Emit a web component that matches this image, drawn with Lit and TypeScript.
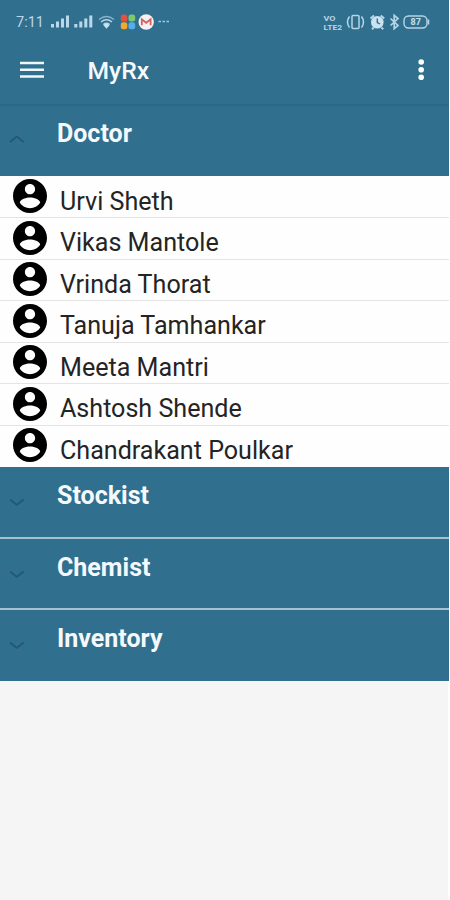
import { LitElement, html, css, svg } from "lit";
import { customElement, property } from "lit/decorators.js";

@customElement("status-bar")
class StatusBar extends LitElement {
  static styles = css`
    :host { display: flex; height: 44px; align-items: center; color: #b9d9e9; font: 500 14.5px Roboto, sans-serif; }
    .clock { width: 33.5px; margin-left: 16px; font-weight: 400; white-space: nowrap; }
    .left { width: 122px; height: 44px; }
    .right { width: 110px; height: 44px; margin-left: auto; margin-right: 17px; }
    svg { display: block; }
    .tiny { font: 700 7.5px/1 Roboto, sans-serif; fill: #b5d6e6; }
    .charge { font: 700 9px Roboto, sans-serif; fill: #c5e0ed; }
    .glyph { fill: none; stroke: #b5d6e6; }
  `;
  bars(x: number) {
    return svg`<path d="M${x} 24h3v3.5h-3zM${x + 5} 21.5h3v6h-3zM${x + 10} 18.5h3v9h-3zM${x + 15} 15.5h3v12h-3z" fill="#b9d9e9"/>`;
  }
  render() {
    return html`
      <span class="clock">7:11</span>
      <svg class="left" viewBox="49.5 0 122 44">
        ${this.bars(50.5)}${this.bars(73.8)}
        <g class="glyph" stroke-width="1.5">
          <path d="M98.5 19.5q7.5-6 15 0" opacity=".65"/>
          <path d="M100.5 22q5.5-4.5 11 0"/>
          <path d="M102.8 24.5q3.2-2.5 6.4 0"/>
        </g>
        <path d="M102.8 25q3.2-2.5 6.4 0l-3.2 3.8z" fill="#c9e3f0"/>
        <rect x="120.3" y="14.5" width="6.5" height="7" rx="2.5" fill="#e0523c"/>
        <rect x="128" y="14.5" width="6.7" height="7" rx="2.5" fill="#7dc76c"/>
        <rect x="120.3" y="22.3" width="6.5" height="7" rx="2.5" fill="#f1a92c"/>
        <rect x="128" y="22.3" width="6.7" height="7" rx="2.5" fill="#55aee5"/>
        <circle cx="145.7" cy="22" r="7.7" fill="#f5f1f3"/>
        <path d="M141.3 25.3v-6l4.4 3.5 4.4-3.5v6" fill="none" stroke="#d6605f" stroke-width="1.8"/>
        <path d="M158 21.5h2.5m1.5 0h2.5m1.5 0h2.5" stroke="#a4c9db" stroke-width="1.7"/>
      </svg>
      <svg class="right" viewBox="322 0 110 44">
        <text class="tiny" x="323.5" y="20.5" textLength="12" lengthAdjust="spacingAndGlyphs">VO</text>
        <text class="tiny" x="323.5" y="29.8" textLength="18.5" lengthAdjust="spacingAndGlyphs">LTE2</text>
        <g class="glyph" stroke-width="1.5">
          <rect x="352" y="15.5" width="7" height="13" rx="1"/>
          <path d="M349.5 16.5q-4 5.5 0 11m12-11q4 5.5 0 11"/>
        </g>
        <circle cx="377.3" cy="22.3" r="6.3" fill="#c9e3f0"/>
        <path d="M370.5 18.5l3.5-3m10.2 3l-3.5-3m-7 12l-1.7 1.7m9.5-1.7l1.7 1.7" class="glyph" stroke-width="2"/>
        <path d="M377.3 18.5v4l2.8 1.5" fill="none" stroke="#316f8f" stroke-width="1.4"/>
        <path d="M390.5 18.5l7.5 7-3.8 3.2v-13.4l3.8 3.2-7.5 7" class="glyph" stroke-width="1.7"/>
        <rect x="404" y="16" width="23" height="12" rx="4.5" class="glyph" stroke-width="1.4"/>
        <path d="M428.5 19.5v5" class="glyph" stroke-width="1.5"/>
        <text class="charge" x="410.5" y="25.2">87</text>
      </svg>`;
  }
}

@customElement("app-toolbar")
class AppToolbar extends LitElement {
  static styles = css`
    :host { display: flex; box-sizing: border-box; height: 62px; padding: 0 21px 0 20px; align-items: flex-start; border-bottom: 2px solid #2d6887; }
    .menu { width: 24px; height: 20px; margin-top: 16px; flex: none; }
    .title { margin: 12px auto 0 43.5px; font: 500 24.7px/30px Roboto, sans-serif; color: #f5fafc; }
    .more { width: 14px; height: 26px; margin-top: 13px; flex: none; }
  `;
  render() {
    return html`
      <svg class="menu" viewBox="0 0 24 20"><path d="M0 3h24M0 9.8h24M0 16.5h24" stroke="#f0f7fa" stroke-width="2.5"/></svg>
      <span class="title">MyRx</span>
      <svg class="more" viewBox="0 0 14 26"><g fill="#fff"><circle cx="7.2" cy="5" r="2.8"/><circle cx="7.2" cy="12.7" r="2.8"/><circle cx="7.2" cy="20.2" r="2.8"/></g></svg>`;
  }
}

@customElement("group-header")
class GroupHeader extends LitElement {
  @property() label = "";
  @property({ type: Boolean }) open = false;
  static styles = css`
    :host { display: flex; box-sizing: border-box; height: 100%; padding-left: 9px; align-items: flex-start; background: #316f8f; }
    .arrow { width: 16px; height: 10px; margin-top: 30px; flex: none; fill: none; stroke: #235774; stroke-width: 1.7; }
    :host([open]) .arrow { margin-top: 27.5px; }
    .label { margin: 14px 0 0 32px; font: 700 25px/30px Roboto, sans-serif; color: #f4f9fc; }
    :host([open]) .label { margin-top: 13px; }
  `;
  render() {
    return html`
      <svg class="arrow" viewBox="0 0 16 10"><path d=${this.open ? "M1 8l6.8-5.5L14.6 8" : "M1 2.5l6.8 5.5L14.6 2.5"}/></svg>
      <span class="label">${this.label}</span>`;
  }
}

@customElement("contact-row")
class ContactRow extends LitElement {
  @property() name = "";
  static styles = css`
    :host { display: flex; box-sizing: border-box; height: 41.5px; padding-left: 12.5px; background: #fefefe; border-bottom: 1.5px solid #e4e4e4; }
    :host(:last-child) { border-bottom: 0; }
    .avatar { width: 34px; height: 34px; margin-top: 2.5px; flex: none; }
    .name { margin: 10px 0 0 13.5px; font: 400 25.1px/30px Roboto, sans-serif; color: #242424; white-space: nowrap; }
  `;
  render() {
    return html`
      <svg class="avatar" viewBox="2 2 20 20"><path d="M12 2C6.48 2 2 6.48 2 12s4.48 10 10 10 10-4.48 10-10S17.52 2 12 2zm0 3c1.66 0 3 1.34 3 3s-1.34 3-3 3-3-1.34-3-3 1.34-3 3-3zm0 14.2c-2.5 0-4.71-1.28-6-3.22.03-1.99 4-3.08 6-3.08 1.99 0 5.97 1.09 6 3.08-1.29 1.94-3.5 3.22-6 3.22z"/></svg>
      <span class="name">${this.name}</span>`;
  }
}

@customElement("app-root")
class AppRoot extends LitElement {
  doctors = ["Urvi Sheth", "Vikas Mantole", "Vrinda Thorat", "Tanuja Tamhankar", "Meeta Mantri", "Ashtosh Shende", "Chandrakant Poulkar"];
  static styles = css`
    :host { display: block; box-sizing: border-box; height: 900px; padding-right: 1.5px; overflow: hidden; background: linear-gradient(to right, #f5f5f5 448px, #fff 448px); }
    .top { background: #316f8f; }
    .first { height: 69.5px; }
    .people { display: block; box-sizing: border-box; height: 291px; padding-top: 1px; overflow: hidden; background: #fefefe; }
    .groups { display: grid; grid-template-rows: 70px 69.5px 70.5px; row-gap: 2px; height: 214px; background: #a5c3cf; }
  `;
  render() {
    return html`
      <div class="top"><status-bar></status-bar><app-toolbar></app-toolbar></div>
      <div class="first"><group-header label="Doctor" open></group-header></div>
      <div class="people">${this.doctors.map((name) => html`<contact-row .name=${name}></contact-row>`)}</div>
      <div class="groups">${["Stockist", "Chemist", "Inventory"].map((label) => html`<group-header .label=${label}></group-header>`)}</div>`;
  }
}
